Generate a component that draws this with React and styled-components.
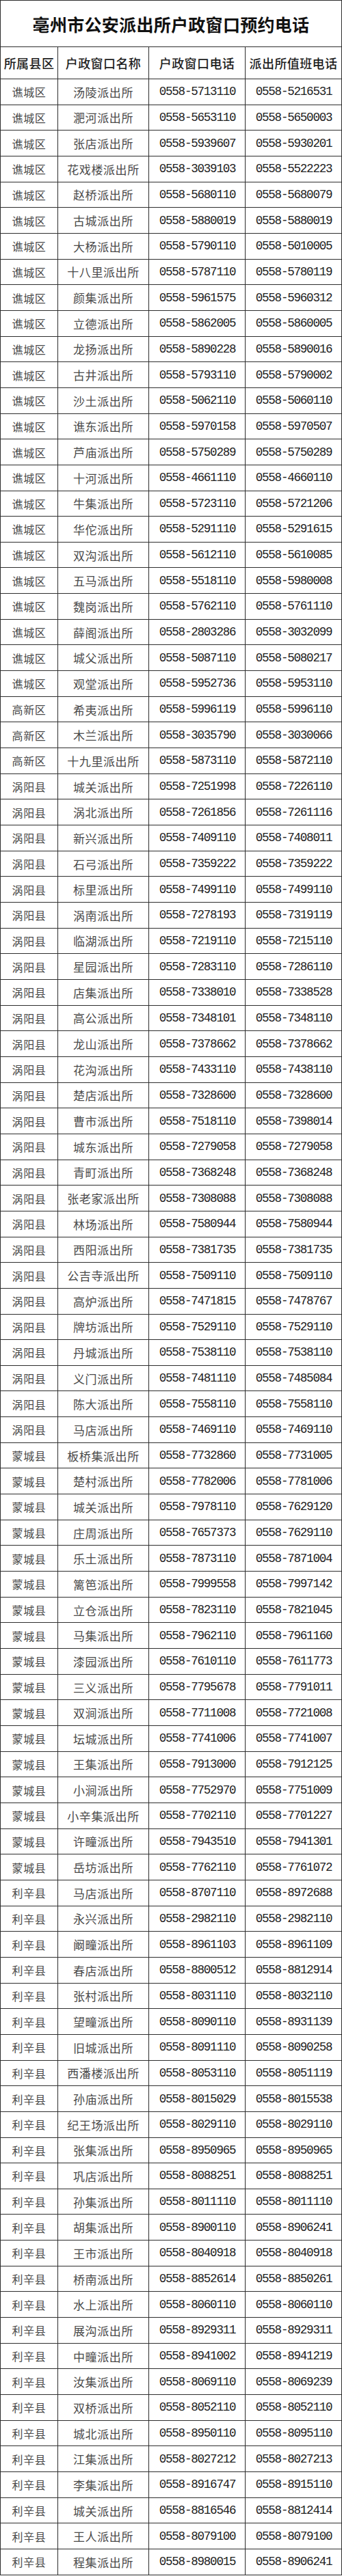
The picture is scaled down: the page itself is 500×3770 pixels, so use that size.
import React from "react";
import styled, { createGlobalStyle, css } from "styled-components";

const GlobalStyle = createGlobalStyle`
  html, body {
    margin: 0;
    padding: 0;
    background: #fff;
  }
  body {
    font-family: "Noto Sans CJK SC", "Liberation Sans", sans-serif;
  }
`;

const line = "1px solid #2e2e2e";

const Sheet = styled.div`
  display: grid;
  grid-template-columns: 84px 133px 141px 141px;
  grid-template-rows: 68px 47px;
  grid-auto-rows: 37.66px;
  width: 500px;
  box-sizing: border-box;
  border-left: ${line};
  border-top: ${line};
  background: #fff;
`;

const cellBase = css`
  display: flex;
  align-items: center;
  justify-content: center;
  box-sizing: border-box;
  border-right: ${line};
  border-bottom: ${line};
  white-space: nowrap;
  overflow: hidden;
`;

const Title = styled.h1`
  ${cellBase}
  grid-column: 1 / -1;
  margin: 0;
  font-size: 25px;
  font-weight: 700;
  letter-spacing: 0.3px;
  color: #111;
`;

const HeadCell = styled.div`
  ${cellBase}
  font-size: 18px;
  font-weight: 500;
  letter-spacing: 0.4px;
  color: #1e1e1e;
`;

const Cell = styled.div`
  ${cellBase}
  color: ${(p) => (p.$kind === "phone" ? "#222" : "#4a4a4a")};
  ${(p) =>
    p.$kind === "phone"
      ? css`
          font-family: "Liberation Mono", "DejaVu Sans Mono", monospace;
          font-size: 17.5px;
          letter-spacing: -1.2px;
          padding-left: 1px;
        `
      : p.$kind === "area"
      ? css`
          font-size: 16px;
          letter-spacing: 0.7px;
        `
      : css`
          font-size: 17px;
          letter-spacing: 0.6px;
        `}
`;

const groups = [
  [
    "谯城区",
    [
      ["汤陵", "5713110", "5216531"],
      ["淝河", "5653110", "5650003"],
      ["张店", "5939607", "5930201"],
      ["花戏楼", "3039103", "5522223"],
      ["赵桥", "5680110", "5680079"],
      ["古城", "5880019", "5880019"],
      ["大杨", "5790110", "5010005"],
      ["十八里", "5787110", "5780119"],
      ["颜集", "5961575", "5960312"],
      ["立德", "5862005", "5860005"],
      ["龙扬", "5890228", "5890016"],
      ["古井", "5793110", "5790002"],
      ["沙土", "5062110", "5060110"],
      ["谯东", "5970158", "5970507"],
      ["芦庙", "5750289", "5750289"],
      ["十河", "4661110", "4660110"],
      ["牛集", "5723110", "5721206"],
      ["华佗", "5291110", "5291615"],
      ["双沟", "5612110", "5610085"],
      ["五马", "5518110", "5980008"],
      ["魏岗", "5762110", "5761110"],
      ["薛阁", "2803286", "3032099"],
      ["城父", "5087110", "5080217"],
      ["观堂", "5952736", "5953110"],
    ],
  ],
  [
    "高新区",
    [
      ["希夷", "5996119", "5996110"],
      ["木兰", "3035790", "3030066"],
      ["十九里", "5873110", "5872110"],
    ],
  ],
  [
    "涡阳县",
    [
      ["城关", "7251998", "7226110"],
      ["涡北", "7261856", "7261116"],
      ["新兴", "7409110", "7408011"],
      ["石弓", "7359222", "7359222"],
      ["标里", "7499110", "7499110"],
      ["涡南", "7278193", "7319119"],
      ["临湖", "7219110", "7215110"],
      ["星园", "7283110", "7286110"],
      ["店集", "7338010", "7338528"],
      ["高公", "7348101", "7348110"],
      ["龙山", "7378662", "7378662"],
      ["花沟", "7433110", "7438110"],
      ["楚店", "7328600", "7328600"],
      ["曹市", "7518110", "7398014"],
      ["城东", "7279058", "7279058"],
      ["青町", "7368248", "7368248"],
      ["张老家", "7308088", "7308088"],
      ["林场", "7580944", "7580944"],
      ["西阳", "7381735", "7381735"],
      ["公吉寺", "7509110", "7509110"],
      ["高炉", "7471815", "7478767"],
      ["牌坊", "7529110", "7529110"],
      ["丹城", "7538110", "7538110"],
      ["义门", "7481110", "7485084"],
      ["陈大", "7558110", "7558110"],
      ["马店", "7469110", "7469110"],
    ],
  ],
  [
    "蒙城县",
    [
      ["板桥集", "7732860", "7731005"],
      ["楚村", "7782006", "7781006"],
      ["城关", "7978110", "7629120"],
      ["庄周", "7657373", "7629110"],
      ["乐土", "7873110", "7871004"],
      ["篱笆", "7999558", "7997142"],
      ["立仓", "7823110", "7821045"],
      ["马集", "7962110", "7961160"],
      ["漆园", "7610110", "7611773"],
      ["三义", "7795678", "7791011"],
      ["双涧", "7711008", "7721008"],
      ["坛城", "7741006", "7741007"],
      ["王集", "7913000", "7912125"],
      ["小涧", "7752970", "7751009"],
      ["小辛集", "7702110", "7701227"],
      ["许疃", "7943510", "7941301"],
      ["岳坊", "7762110", "7761072"],
    ],
  ],
  [
    "利辛县",
    [
      ["马店", "8707110", "8972688"],
      ["永兴", "2982110", "2982110"],
      ["阚疃", "8961103", "8961109"],
      ["春店", "8800512", "8812914"],
      ["张村", "8031110", "8032110"],
      ["望疃", "8090110", "8931139"],
      ["旧城", "8091110", "8090258"],
      ["西潘楼", "8053110", "8051119"],
      ["孙庙", "8015029", "8015538"],
      ["纪王场", "8029110", "8029110"],
      ["张集", "8950965", "8950965"],
      ["巩店", "8088251", "8088251"],
      ["孙集", "8011110", "8011110"],
      ["胡集", "8900110", "8906241"],
      ["王市", "8040918", "8040918"],
      ["桥南", "8852614", "8850261"],
      ["水上", "8060110", "8060110"],
      ["展沟", "8929311", "8929311"],
      ["中疃", "8941002", "8941219"],
      ["汝集", "8069110", "8069239"],
      ["双桥", "8052110", "8052110"],
      ["城北", "8950110", "8095110"],
      ["江集", "8027212", "8027213"],
      ["李集", "8916747", "8915110"],
      ["城关", "8816546", "8812414"],
      ["王人", "8079100", "8079100"],
      ["程集", "8980015", "8906241"],
    ],
  ],
];

const headers = ["所属县区", "户政窗口名称", "户政窗口电话", "派出所值班电话"];

export default function App() {
  return (
    <>
      <GlobalStyle />
      <Sheet>
        <Title>亳州市公安派出所户政窗口预约电话</Title>
        {headers.map((h) => (
          <HeadCell key={h}>{h}</HeadCell>
        ))}
        {groups.map(([area, rows]) =>
          rows.map(([name, win, duty]) => (
            <React.Fragment key={area + name}>
              <Cell $kind="area">{area}</Cell>
              <Cell $kind="name">{name}派出所</Cell>
              <Cell $kind="phone">0558-{win}</Cell>
              <Cell $kind="phone">0558-{duty}</Cell>
            </React.Fragment>
          ))
        )}
      </Sheet>
    </>
  );
}
